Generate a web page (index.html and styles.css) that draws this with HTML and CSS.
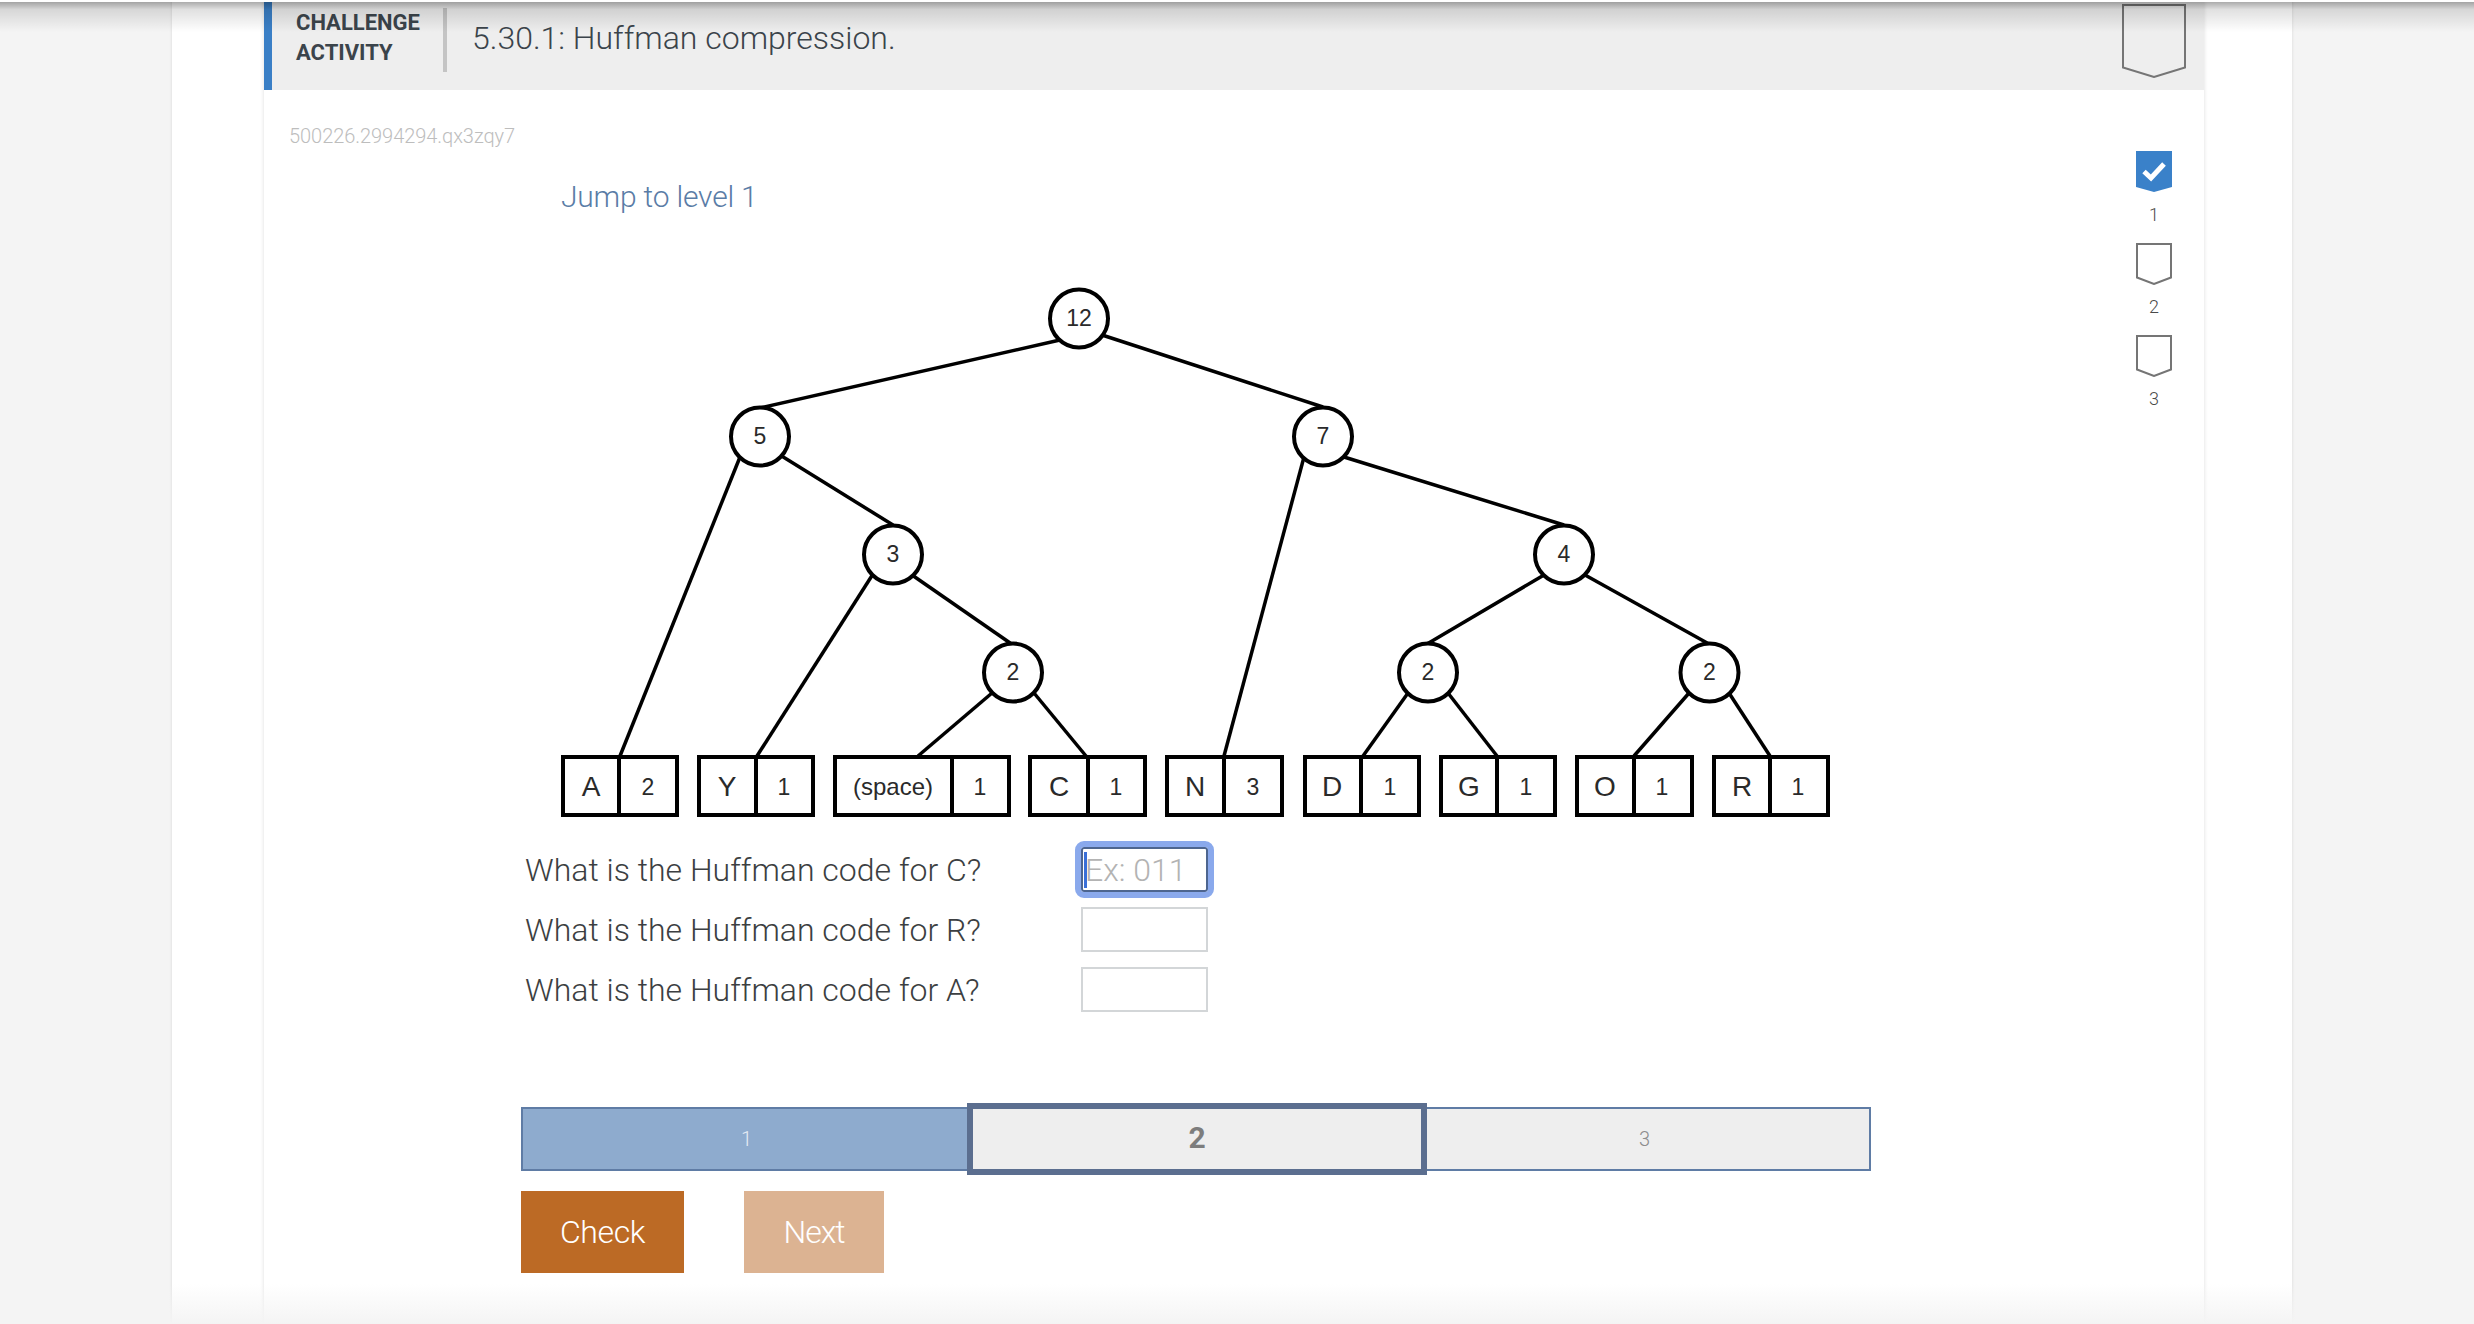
FILE: index.html
```html
<!DOCTYPE html>
<html lang="en">
<head>
<meta charset="utf-8">
<title>5.30.1: Huffman compression</title>
<link rel="stylesheet" href="styles.css">
</head>
<body>
<div class="sheet">
  <div class="card">
    <header class="head">
      <div class="kicker">CHALLENGE<br>ACTIVITY</div>
      <h1 class="title">5.30.1: Huffman compression.</h1>
      <svg class="head-mark" width="64" height="74" viewBox="0 0 64 74"><path class="mark-empty" d="M1 1H63V63.500L32 73L1 63.500Z"/></svg>
    </header>
    <div class="body">
      <main class="main">
        <div class="uid">500226.2994294.qx3zqy7</div>
        <div class="jump">Jump to level 1</div>
        <svg class="tree" width="1330" height="545" viewBox="521 280 1330 545">
          <g class="edges">
            <line x1="1060" y1="340" x2="760" y2="408"/>
            <line x1="1102" y1="335" x2="1323" y2="407"/>
            <line x1="740" y1="457" x2="620" y2="756"/>
            <line x1="780" y1="455" x2="893" y2="525"/>
            <line x1="873" y1="574" x2="757" y2="756"/>
            <line x1="912" y1="575" x2="1013" y2="645"/>
            <line x1="992" y1="693" x2="918" y2="756"/>
            <line x1="1034" y1="693" x2="1086" y2="756"/>
            <line x1="1304" y1="457" x2="1224" y2="756"/>
            <line x1="1344" y1="457" x2="1564" y2="525"/>
            <line x1="1544" y1="575" x2="1427" y2="644"/>
            <line x1="1585" y1="575" x2="1709" y2="644"/>
            <line x1="1408" y1="693" x2="1363" y2="756"/>
            <line x1="1448" y1="693" x2="1497" y2="756"/>
            <line x1="1689" y1="693" x2="1634" y2="756"/>
            <line x1="1729" y1="693" x2="1770" y2="756"/>
          </g>
          <g class="nodes">
            <circle cx="1079" cy="318.500" r="29"/><text x="1079" y="326">12</text>
            <circle cx="760" cy="436.500" r="29"/><text x="760" y="444">5</text>
            <circle cx="1323" cy="436.500" r="29"/><text x="1323" y="444">7</text>
            <circle cx="893" cy="554.500" r="29"/><text x="893" y="562">3</text>
            <circle cx="1564" cy="554.500" r="29"/><text x="1564" y="562">4</text>
            <circle cx="1013" cy="672.500" r="29"/><text x="1013" y="680">2</text>
            <circle cx="1428" cy="672.500" r="29"/><text x="1428" y="680">2</text>
            <circle cx="1709.500" cy="672.500" r="29"/><text x="1709.500" y="680">2</text>
          </g>
          <g class="leaves">
            <rect x="563" y="757" width="114" height="58"/><line x1="619" y1="757" x2="619" y2="815"/>
            <text class="big" x="591" y="796">A</text><text x="648" y="795">2</text>
            <rect x="699" y="757" width="114" height="58"/><line x1="756" y1="757" x2="756" y2="815"/>
            <text class="big" x="727" y="796">Y</text><text x="784" y="795">1</text>
            <rect x="835" y="757" width="174" height="58"/><line x1="952" y1="757" x2="952" y2="815"/>
            <text class="wide" x="893" y="795">(space)</text><text x="980" y="795">1</text>
            <rect x="1030" y="757" width="115" height="58"/><line x1="1088" y1="757" x2="1088" y2="815"/>
            <text class="big" x="1059" y="796">C</text><text x="1116" y="795">1</text>
            <rect x="1167" y="757" width="115" height="58"/><line x1="1224" y1="757" x2="1224" y2="815"/>
            <text class="big" x="1195" y="796">N</text><text x="1253" y="795">3</text>
            <rect x="1305" y="757" width="114" height="58"/><line x1="1361" y1="757" x2="1361" y2="815"/>
            <text class="big" x="1332" y="796">D</text><text x="1390" y="795">1</text>
            <rect x="1441" y="757" width="114" height="58"/><line x1="1497" y1="757" x2="1497" y2="815"/>
            <text class="big" x="1469" y="796">G</text><text x="1526" y="795">1</text>
            <rect x="1577" y="757" width="115" height="58"/><line x1="1634" y1="757" x2="1634" y2="815"/>
            <text class="big" x="1605" y="796">O</text><text x="1662" y="795">1</text>
            <rect x="1714" y="757" width="114" height="58"/><line x1="1770" y1="757" x2="1770" y2="815"/>
            <text class="big" x="1742" y="796">R</text><text x="1798" y="795">1</text>
          </g>
        </svg>
        <div class="questions">
          <div class="q-row">
            <label class="q-label">What is the Huffman code for C?</label>
            <span class="q-field"><input class="q-input is-focus" type="text" placeholder="Ex: 011"><span class="caret"></span></span>
          </div>
          <div class="q-row">
            <label class="q-label">What is the Huffman code for R?</label>
            <span class="q-field"><input class="q-input" type="text"></span>
          </div>
          <div class="q-row">
            <label class="q-label">What is the Huffman code for A?</label>
            <span class="q-field"><input class="q-input" type="text"></span>
          </div>
        </div>
        <div class="levels">
          <div class="level done">1</div>
          <div class="level current">2</div>
          <div class="level todo">3</div>
        </div>
        <div class="actions">
          <button class="btn btn-check" type="button">Check</button>
          <button class="btn btn-next" type="button">Next</button>
        </div>
      </main>
      <aside class="rail">
        <div class="rail-item">
          <svg width="36" height="42" viewBox="0 0 36 42"><path class="mark-done" d="M0 0H36V36L18 41L0 36Z"/><path class="tick" d="M8 20.500L15 27L28 13"/></svg>
          <span class="rail-num">1</span>
        </div>
        <div class="rail-item">
          <svg width="36" height="42" viewBox="0 0 36 42"><path class="mark-empty" d="M1 1H35V34.500L18 41L1 34.500Z"/></svg>
          <span class="rail-num">2</span>
        </div>
        <div class="rail-item">
          <svg width="36" height="42" viewBox="0 0 36 42"><path class="mark-empty" d="M1 1H35V34.500L18 41L1 34.500Z"/></svg>
          <span class="rail-num">3</span>
        </div>
      </aside>
    </div>
  </div>
</div>
<div class="top-shade"></div>
<div class="bottom-fade"></div>
</body>
</html>
```

FILE: styles.css
```css
* { box-sizing: border-box; }
html, body { margin: 0; height: 1324px; overflow: hidden; }
body {
  background: #f4f4f4;
  font-family: Roboto, "Liberation Sans", sans-serif;
  font-weight: 300;
  color: #3c3f42;
}
.sheet {
  width: 2120px;
  height: 1324px;
  margin-left: 172px;
  padding-left: 92px;
  background: #fff;
  box-shadow: 0 0 3px rgba(0, 0, 0, .12);
}
.card {
  width: 1940px;
  height: 1324px;
  background: #fff;
  box-shadow: 0 0 4px rgba(0, 0, 0, .14);
}
.head {
  display: flex;
  align-items: flex-start;
  height: 90px;
  background: #eeeeee;
  border-left: 8px solid #3a7fc6;
}
.kicker {
  width: 175px;
  height: 64px;
  margin-top: 8px;
  padding-left: 24px;
  border-right: 4px solid #c4c4c4;
  font-size: 22px;
  font-weight: 700;
  line-height: 30px;
  color: #3b444b;
}
.title {
  flex: 1;
  margin: 16px 0 0 25px;
  font-size: 32px;
  font-weight: 300;
  line-height: 44px;
  color: #3b444b;
}
.head-mark { margin: 4px 18px 0 0; }
.mark-empty { fill: none; stroke: #757575; stroke-width: 2; }
.mark-done { fill: #3a81c9; }
.tick { fill: none; stroke: #fff; stroke-width: 5; }
.body { display: flex; }
.main { flex: 1; padding-left: 25px; }
.uid {
  margin-top: 34px;
  font-size: 20px;
  letter-spacing: -.05px;
  line-height: 24px;
  color: #bdbdbd;
}
.jump {
  margin: 29px 0 0 272px;
  font-size: 30px;
  letter-spacing: -.2px;
  line-height: 40px;
  color: #5a7ca6;
}
.tree { display: block; margin: 63px 0 0 232px; }
.edges line, .leaves line, .leaves rect, .nodes circle { stroke: #000; fill: #fff; }
.edges line { stroke-width: 3.500; }
.nodes circle { stroke-width: 4; }
.leaves rect, .leaves line { stroke-width: 4; }
.tree text {
  font-family: "Liberation Sans", Arial, sans-serif;
  font-size: 23px;
  font-weight: 400;
  text-anchor: middle;
  fill: #2a2a2a;
}
.tree text.big { font-size: 28px; }
.tree text.wide { font-size: 24px; }
.questions { margin: 15px 0 0 236px; }
.q-row { display: flex; align-items: flex-start; height: 60px; padding-top: 7px; }
.q-label { width: 556px; font-size: 32px; line-height: 46px; }
.q-field { position: relative; display: block; }
.q-input {
  display: block;
  width: 127px;
  height: 45px;
  padding: 0 2px;
  border: 2px solid #d3d6d8;
  border-radius: 0;
  outline: none;
  background: #fff;
  font-family: inherit;
  font-size: 32px;
  font-weight: 300;
}
.q-input::placeholder { color: #b3b3b3; opacity: 1; }
.q-input.is-focus {
  border-color: #4d658f;
  outline: 6px solid #8aa9ec;
  outline-offset: 0;
  border-radius: 3px;
}
.caret {
  position: absolute;
  left: 3px;
  top: 5px;
  width: 3px;
  height: 36px;
  background: #3a6fd8;
}
.levels {
  display: flex;
  align-items: center;
  height: 72px;
  margin: 83px 0 0 232px;
}
.level {
  display: flex;
  align-items: center;
  justify-content: center;
  height: 64px;
  border: 2px solid #5f7ca5;
  font-size: 20px;
}
.done { width: 446px; border-right: 0; padding-left: 3px; background: #8eabce; color: #e6edf5; }
.current {
  width: 460px;
  height: 72px;
  padding-bottom: 3px;
  border: 6px solid #5b6e8f;
  background: #eeeeee;
  font-size: 30px;
  font-weight: 700;
  color: #7d7d7d;
}
.todo { width: 444px; border-left: 0; padding-right: 7px; background: #eeeeee; color: #8c8c8c; }
.actions { display: flex; gap: 60px; margin: 16px 0 0 232px; }
.btn {
  height: 82px;
  padding: 0;
  border: 0;
  font-family: inherit;
  font-size: 32px;
  font-weight: 300;
  color: #fff;
}
.btn-check { width: 163px; letter-spacing: -.4px; background: #bc6a25; }
.btn-next { width: 140px; letter-spacing: -1px; background: #dcb392; }
.rail { width: 36px; margin-right: 32px; padding-top: 61px; }
.rail-item { height: 92px; text-align: center; }
.rail-item svg { display: block; }
.rail-num { display: block; margin-top: 10px; font-size: 18px; line-height: 24px; color: #4a4a4a; }
.top-shade {
  position: absolute;
  left: 0; right: 0; top: 0;
  height: 32px;
  border-top: 2px solid #fff;
  background: linear-gradient(rgba(0, 0, 0, .33), rgba(0, 0, 0, .12) 25%, rgba(0, 0, 0, 0));
}
.bottom-fade {
  position: absolute;
  left: 0; right: 0; top: 1284px;
  height: 40px;
  background: linear-gradient(rgba(244, 244, 244, 0), #f4f4f4);
}
```
